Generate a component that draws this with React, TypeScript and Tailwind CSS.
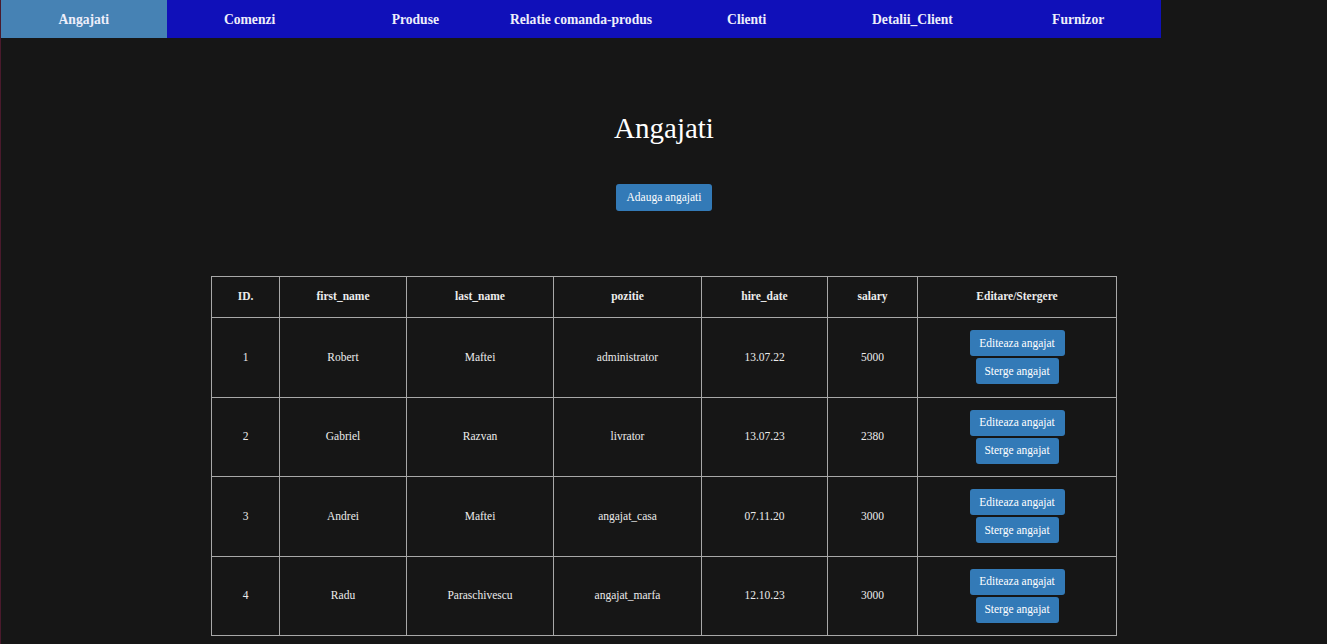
import React from 'react';

const tabs = ['Angajati', 'Comenzi', 'Produse', 'Relatie comanda-produs', 'Clienti', 'Detalii_Client', 'Furnizor'];

const columns = [
  { label: 'ID.', w: 'w-[68px]' },
  { label: 'first_name', w: 'w-[127px]' },
  { label: 'last_name', w: 'w-[147px]' },
  { label: 'pozitie', w: 'w-[148px]' },
  { label: 'hire_date', w: 'w-[126px]' },
  { label: 'salary', w: 'w-[90px]' },
  { label: 'Editare/Stergere', w: 'w-[199px]' },
];

const angajati = [
  { id: 1, first: 'Robert', last: 'Maftei', pozitie: 'administrator', hire: '13.07.22', salary: 5000 },
  { id: 2, first: 'Gabriel', last: 'Razvan', pozitie: 'livrator', hire: '13.07.23', salary: 2380 },
  { id: 3, first: 'Andrei', last: 'Maftei', pozitie: 'angajat_casa', hire: '07.11.20', salary: 3000 },
  { id: 4, first: 'Radu', last: 'Paraschivescu', pozitie: 'angajat_marfa', hire: '12.10.23', salary: 3000 },
];

const App: React.FC = () => {
  return (
    <div className="min-h-[644px] bg-[#161616] border-l border-[#4a1a2c] text-white font-['Liberation_Serif','Times_New_Roman',serif]">
      <nav className="flex w-[1160px] h-[38px] bg-[#1010b9]">
        {tabs.map((tab, i) => (
          <a
            key={tab}
            className={`flex-1 flex items-center justify-center pt-[3px] text-[13.6px] font-bold text-[#eeeefa] ${i === 0 ? 'bg-[#4682b4]' : ''}`}
          >
            {tab}
          </a>
        ))}
      </nav>

      <div className="flex flex-col items-center">
        <h1 className="mt-[73px] text-[29px] leading-[34px] text-white">Angajati</h1>
        <button className="mt-[39px] h-[27px] px-[10px] rounded-[3px] bg-[#337ab7] text-[11.5px] text-white">
          Adauga angajati
        </button>

        <table className="mt-[65px] table-fixed border-collapse text-[11.5px] text-[#ececec]">
          <thead>
            <tr className="h-[41px]">
              {columns.map((c) => (
                <th key={c.label} className={`${c.w} border border-[#a8a8a8] font-bold text-center`}>
                  {c.label}
                </th>
              ))}
            </tr>
          </thead>
          <tbody>
            {angajati.map((a) => (
              <tr key={a.id} className="h-[79.6px]">
                <td className="border border-[#a8a8a8] text-center">{a.id}</td>
                <td className="border border-[#a8a8a8] text-center">{a.first}</td>
                <td className="border border-[#a8a8a8] text-center">{a.last}</td>
                <td className="border border-[#a8a8a8] text-center">{a.pozitie}</td>
                <td className="border border-[#a8a8a8] text-center">{a.hire}</td>
                <td className="border border-[#a8a8a8] text-center">{a.salary}</td>
                <td className="border border-[#a8a8a8] text-center">
                  <div className="flex flex-col items-center gap-[2px]">
                    <button className="h-[26px] w-[95px] rounded-[3px] bg-[#337ab7] text-white">Editeaza angajat</button>
                    <button className="h-[26px] w-[83px] rounded-[3px] bg-[#337ab7] text-white">Sterge angajat</button>
                  </div>
                </td>
              </tr>
            ))}
          </tbody>
        </table>
      </div>
    </div>
  );
};

export default App;
